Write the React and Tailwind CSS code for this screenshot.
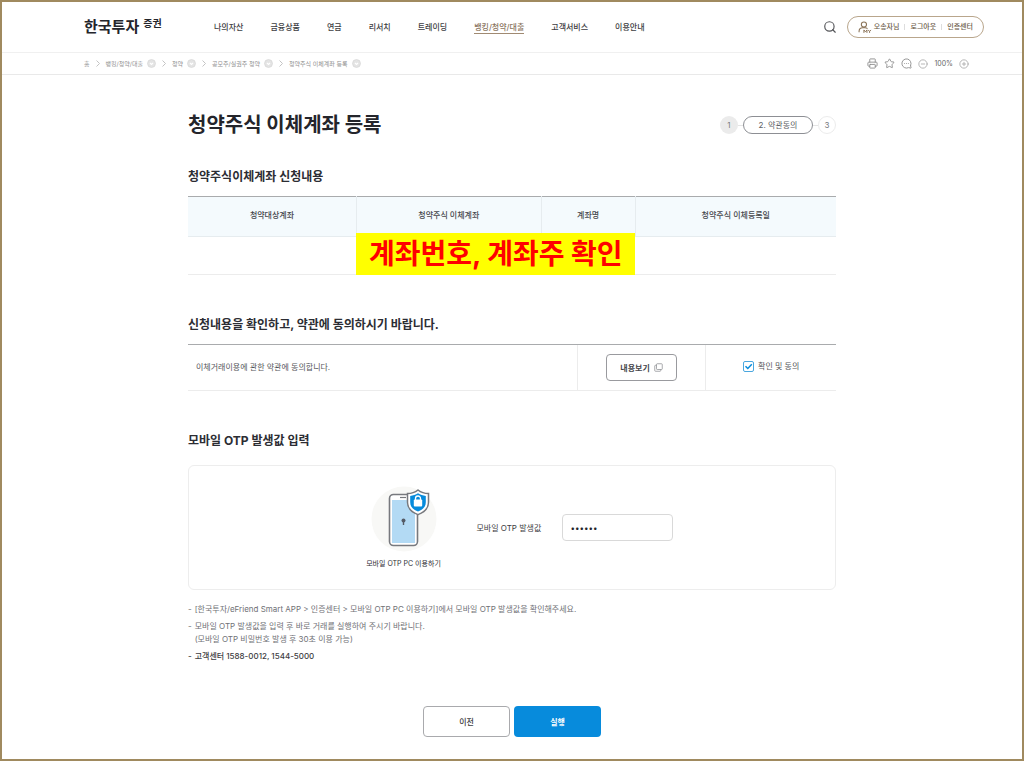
import React, { useState } from "react";
import { Search, Printer, Star, MessageCircleMore, CircleMinus, CirclePlus } from "lucide-react";

const menus = [
  { title: "나의자산" },
  { title: "금융상품" },
  { title: "연금" },
  { title: "리서치" },
  { title: "트레이딩" },
  { title: "뱅킹/청약/대출", active: true },
  { title: "고객서비스" },
  { title: "이용안내" },
];

const crumbs = ["뱅킹/청약/대출", "청약", "공모주/실권주 청약", "청약주식 이체계좌 등록"];

const MyIcon = () => (
  <svg width="14" height="13" viewBox="0 0 26 24" fill="none" stroke="#8a7357" strokeWidth="2">
    <circle cx="11" cy="6.500" r="4.800" />
    <path d="M2 21v-2c0-4 3-6.500 7-6.500h4c2 0 3.500.6 4.700 1.600" />
    <path d="M11 22v-5.500l2.800 3.500 2.800-3.500V22M19 16.500l2.500 3 2.500-3M21.500 19.500V22" strokeWidth="1.800" />
  </svg>
);

const Arrow = () => (
  <svg className="mx-[6px]" width="4" height="7" viewBox="0 0 4 7" fill="none" stroke="#c4c4c4">
    <path d="M.5.500l3 3-3 3" />
  </svg>
);

const CrumbIcon = () => (
  <svg width="9" height="9" viewBox="0 0 18 18">
    <circle cx="9" cy="9" r="8" fill="#e4e4e4" stroke="#cfcfcf" />
    <path d="M6 8l3 3 3-3" fill="none" stroke="#fff" strokeWidth="2.400" />
  </svg>
);

const CopyIcon = () => (
  <svg width="9" height="9" viewBox="0 0 18 18" fill="none" stroke="#8b8e92" strokeWidth="1.500">
    <rect x="5" y="1.500" width="11.500" height="11.500" rx="1.500" />
    <path d="M5 4.500H3a1.500 1.500 0 0 0-1.500 1.500v9A1.500 1.500 0 0 0 3 16.500h9a1.500 1.500 0 0 0 1.500-1.500v-2" />
  </svg>
);

const PhoneArt = () => (
  <svg width="66" height="66" viewBox="0 0 66 66" fill="none">
    <circle cx="33" cy="33" r="32.500" fill="#f8f8f6" />
    <rect x="18.500" y="8.500" width="28" height="51" rx="4" fill="#fff" stroke="#77797e" strokeWidth="1.600" />
    <path d="M29 11.500h6" stroke="#77797e" strokeWidth="1.200" />
    <rect x="21" y="14" width="23" height="43" fill="#b3daf4" />
    <circle cx="32.500" cy="34.500" r="2" fill="#555b66" />
    <path d="M32.500 35v4" stroke="#555b66" strokeWidth="1.400" />
    <path d="M47 4c3 2.400 6.500 3.600 10.500 3.600v8.600c0 6-4 10-10.500 12.400-6.500-2.400-10.500-6.400-10.500-12.400V7.600C40.500 7.600 44 6.400 47 4z" fill="#fff" stroke="#77797e" strokeWidth="1.500" />
    <path d="M47 7.300c2.300 1.500 5 2.400 7.800 2.700v6.200c0 4.500-2.800 7.300-7.800 9.400-5-2.100-7.800-4.900-7.800-9.400V10c2.800-.3 5.500-1.200 7.800-2.700z" fill="#078bdc" />
    <rect x="42.800" y="13.500" width="8.400" height="7" rx="1" fill="#fff" />
    <path d="M44.500 14v-1.500a2.500 2.500 0 0 1 5 0V14" stroke="#fff" strokeWidth="1.300" />
  </svg>
);

const Header = () => (
  <header>
    <div className="flex h-[51px] items-center border-b border-[#f0f0f0] pr-[38px] pl-[82px]">
      <a href="#home" className="flex w-[130px] items-start gap-1 font-bold text-[#24252b]">
        <span className="text-[15px] leading-5">한국투자</span>
        <span className="text-[10px] leading-3">증권</span>
      </a>
      <nav className="flex flex-1 gap-[27px] text-[8px] leading-3 font-medium whitespace-nowrap text-[#3d3d42]">
        {menus.map((item) => (
          <a
            key={item.title}
            href="#menu"
            className={item.active ? "border-b border-[#a08a72] text-[#8a7560]" : "border-b border-transparent"}
          >
            {item.title}
          </a>
        ))}
      </nav>
      <button type="button" aria-label="검색" className="mr-[10px] text-[#55565a]">
        <Search size={14} strokeWidth={2} />
      </button>
      <div className="flex h-[22px] items-center rounded-full border border-[#b9a68c] px-[10px] text-[7px] leading-3 font-medium whitespace-nowrap text-[#6b5a48]">
        <a href="#my" className="flex items-center gap-[2px]">
          <MyIcon />
          오송자님
        </a>
        <span className="mx-[5px] h-[6px] w-px bg-[#dddddd]"></span>
        <a href="#logout">로그아웃</a>
        <span className="mx-[5px] h-[6px] w-px bg-[#dddddd]"></span>
        <a href="#cert">인증센터</a>
      </div>
    </div>

    <div className="flex h-[22px] items-center justify-between border-b border-[#e9e9e9] pr-[53px] pl-[82px] text-[#8f8f8f]">
      <nav className="flex items-center text-[6px] leading-3 whitespace-nowrap">
        <a href="#home">홈</a>
        {crumbs.map((item) => (
          <React.Fragment key={item}>
            <Arrow />
            <button type="button" className="flex items-center gap-[4px]">
              {item}
              <CrumbIcon />
            </button>
          </React.Fragment>
        ))}
      </nav>
      <div className="flex items-center gap-[6px]">
        <button type="button" aria-label="인쇄"><Printer size={11} strokeWidth={2} /></button>
        <button type="button" aria-label="즐겨찾기"><Star size={11} strokeWidth={2} /></button>
        <button type="button" aria-label="채팅"><MessageCircleMore size={11} strokeWidth={2} className="-scale-x-100" /></button>
        <button type="button" aria-label="축소"><CircleMinus size={10} strokeWidth={2} className="text-[#a8a8a8]" /></button>
        <span className="text-[7px] leading-3 text-[#666666]">100%</span>
        <button type="button" aria-label="확대"><CirclePlus size={10} strokeWidth={2} className="text-[#a8a8a8]" /></button>
      </div>
    </div>
  </header>
);

const Steps = () => (
  <ol className="flex items-center text-[8px] leading-3 text-[#77797e]">
    <li className="flex size-[18px] items-center justify-center rounded-full bg-[#ebebeb]">1</li>
    <li className="h-px w-[5px] bg-[#e4e4e4]"></li>
    <li className="flex h-[18px] w-[70px] items-center justify-center rounded-full border border-[#8d8f94] text-[#5c5e63]">
      2. 약관동의
    </li>
    <li className="h-px w-[5px] bg-[#e4e4e4]"></li>
    <li className="flex size-[18px] items-center justify-center rounded-full border border-[#ececec]">3</li>
  </ol>
);

const App = () => {
  const [agree, setAgree] = useState(true);
  const [otp, setOtp] = useState("123456");

  return (
    <div
      lang="ko"
      className="min-h-screen border-2 border-[#a08a5f] bg-white font-['Inter','Noto_Sans_CJK_KR',sans-serif] text-[#2c2d33]"
    >
      <Header />

      <main className="mx-auto w-full max-w-[648px] pt-9 pb-[22px]">
        <div className="flex items-center justify-between">
          <h1 className="text-[20px] leading-7 font-bold text-[#24252b]">청약주식 이체계좌 등록</h1>
          <Steps />
        </div>

        <section className="relative mt-[30px]">
          <h2 className="text-[12px] leading-4 font-bold">청약주식이체계좌 신청내용</h2>
          <table className="mt-[11px] w-full table-fixed border-t border-[#a9abad] text-[8px] leading-3">
            <thead>
              <tr className="h-10 bg-[#f4fafd] text-[#45464b]">
                <th className="w-[26%] border-r border-b border-[#e6ecef] pb-[3px] font-medium">청약대상계좌</th>
                <th className="w-[28.5%] border-r border-b border-[#e6ecef] pb-[3px] font-medium">청약주식 이체계좌</th>
                <th className="w-[14.5%] border-r border-b border-[#e6ecef] pb-[3px] font-medium">계좌명</th>
                <th className="border-b border-[#e6ecef] pb-[3px] font-medium">청약주식 이체등록일</th>
              </tr>
            </thead>
            <tbody>
              <tr className="h-[38px] border-b border-[#ececec]">
                <td className="border-r border-[#ececec]"></td>
                <td></td>
                <td></td>
                <td></td>
              </tr>
            </tbody>
          </table>
          {/* callout over the account cells */}
          <strong className="absolute bottom-0 left-[26%] flex h-[42px] w-[43%] items-center justify-center bg-[#ffff00] text-[28px] leading-8 font-bold whitespace-nowrap text-[#ff0000]">
            계좌번호, 계좌주 확인
          </strong>
        </section>

        <section className="mt-[42px]">
          <h2 className="text-[12px] leading-4 font-bold">신청내용을 확인하고, 약관에 동의하시기 바랍니다.</h2>
          <div className="mt-[11px] flex h-[47px] border-t border-b border-t-[#a9abad] border-b-[#ececec] text-[8px] leading-3 text-[#55565a]">
            <p className="flex w-[60%] items-center pb-[2px] pl-2">이체거래이용에 관한 약관에 동의합니다.</p>
            <div className="flex w-[20%] items-center justify-center border-r border-l border-[#ececec]">
              <button
                type="button"
                className="flex h-[27px] w-[71px] items-center justify-center gap-1 rounded border border-[#999a9e] font-bold text-[#45464b]"
              >
                내용보기
                <CopyIcon />
              </button>
            </div>
            <div className="flex flex-1 items-center justify-center pb-[3px]">
              <label className="flex items-center gap-1">
                <span className="relative flex">
                  <input
                    type="checkbox"
                    checked={agree}
                    onChange={(e) => setAgree(e.target.checked)}
                    className="peer size-[11px] appearance-none rounded-[2px] border border-[#4aa7df] bg-white"
                  />
                  <svg
                    className="pointer-events-none absolute inset-0 hidden peer-checked:block"
                    width="11"
                    height="11"
                    viewBox="0 0 11 11"
                    fill="none"
                    stroke="#078bdc"
                    strokeWidth="1.500"
                  >
                    <path d="M2.500 5.200l2.300 2.300 4-4.300" />
                  </svg>
                </span>
                확인 및 동의
              </label>
            </div>
          </div>
        </section>

        <section className="mt-[42px]">
          <h2 className="text-[12px] leading-4 font-bold">모바일 OTP 발생값 입력</h2>
          <div className="mt-4 flex h-[125px] items-center justify-center rounded-md border border-[#ededed] pl-3">
            <a href="#otp" className="flex w-[80px] flex-col items-center text-[7px] leading-3 whitespace-nowrap">
              <PhoneArt />
              <span className="mt-[6px]">모바일 OTP PC 이용하기</span>
            </a>
            <label htmlFor="otp" className="ml-[33px] w-[85px] text-[8px] leading-3 whitespace-nowrap text-[#3d3d42]">
              모바일 OTP 발생값
            </label>
            <input
              id="otp"
              type="password"
              value={otp}
              onChange={(e) => setOtp(e.target.value)}
              className="h-[27px] w-[111px] rounded border border-[#d9d9d9] px-2 text-[8px] leading-3 text-[#24252b]"
            />
          </div>

          <ul className="mt-[13px] text-[8px] leading-[13px] text-[#707176]">
            <li className="flex gap-[3px]">
              <span>-</span>
              <p>[한국투자/eFriend Smart APP &gt; 인증센터 &gt; 모바일 OTP PC 이용하기]에서 모바일 OTP 발생값을 확인해주세요.</p>
            </li>
            <li className="mt-1 flex gap-[3px]">
              <span>-</span>
              <p>
                모바일 OTP 발생값을 입력 후 바로 거래를 실행하여 주시기 바랍니다.
                <br />
                (모바일 OTP 비밀번호 발생 후 30초 이용 가능)
              </p>
            </li>
            <li className="mt-1 flex gap-[3px] font-medium text-[#3d3d42]">
              <span>-</span>
              <p>고객센터 1588-0012, 1544-5000</p>
            </li>
          </ul>
        </section>

        <div className="mt-[43px] flex justify-center gap-1 text-[8px] leading-3 font-medium">
          <button type="button" className="h-[31px] w-[87px] rounded border border-[#a9aaad] text-[#3d3d42]">
            이전
          </button>
          <button type="button" className="h-[31px] w-[87px] rounded bg-[#078bdc] font-bold text-white">
            실행
          </button>
        </div>
      </main>
    </div>
  );
};

export default App;
